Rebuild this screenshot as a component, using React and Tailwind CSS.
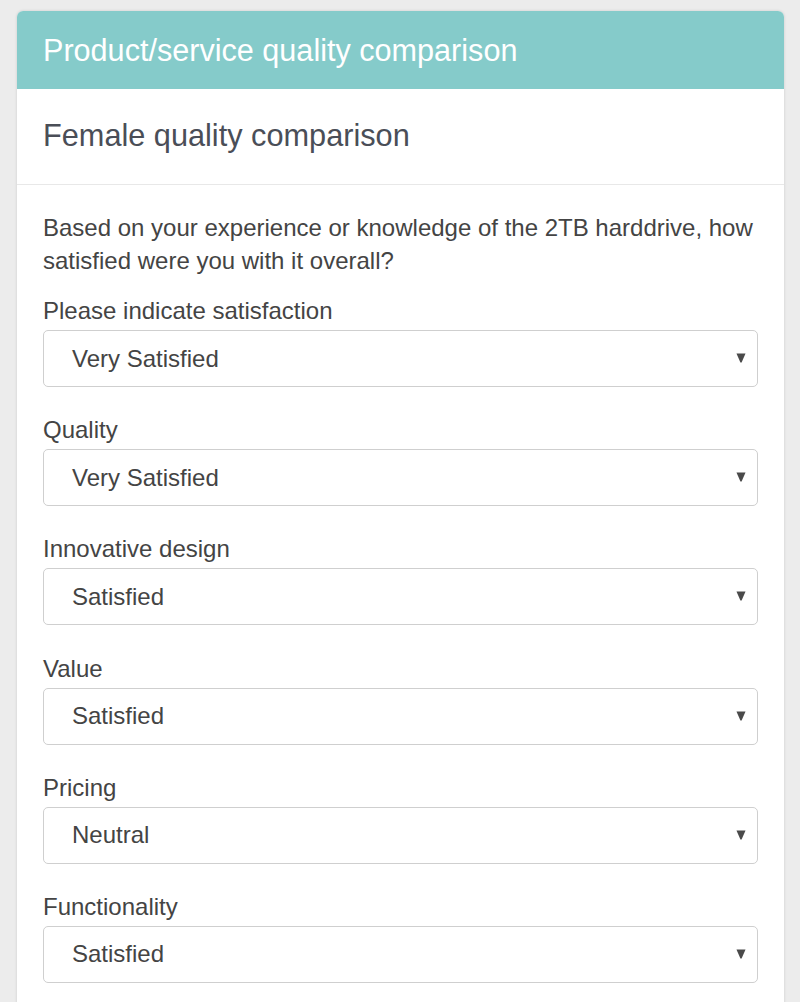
import React from "react";

const fields = [
  { label: "Please indicate satisfaction", value: "Very Satisfied" },
  { label: "Quality", value: "Very Satisfied" },
  { label: "Innovative design", value: "Satisfied" },
  { label: "Value", value: "Satisfied" },
  { label: "Pricing", value: "Neutral" },
  { label: "Functionality", value: "Satisfied" },
];

function Select({ value }) {
  return (
    <div className="flex h-[57px] items-center justify-between rounded-[5px] border border-[#cfcfcf] bg-white pl-[28px] pr-[11px]">
      <span className="text-[24px] leading-none text-[#444]">{value}</span>
      <svg width="10" height="10" viewBox="0 0 10 10" className="mt-[-1px]">
        <polygon points="0.5,0.5 9.5,0.5 5.6,9.5 4.4,9.5" fill="#4a4a4a" />
      </svg>
    </div>
  );
}

export default function App() {
  return (
    <div
      className="min-h-[1002px] w-full bg-[#ececec] pl-[17px] pr-[16px] pt-[11px]"
      style={{ fontFamily: '"Liberation Sans", Arial, sans-serif' }}
    >
      <div className="overflow-hidden rounded-t-[6px] bg-white shadow-[0_0_3px_rgba(0,0,0,0.15)]">
        <div className="flex h-[78px] items-center bg-[#85cbca] px-[26px]">
          <h1 className="text-[30.6px] leading-none text-white">
            Product/service quality comparison
          </h1>
        </div>
        <div className="flex h-[96px] items-center border-b border-[#e8e8e8] px-[26px]">
          <h2 className="text-[30.7px] leading-none text-[#4a4e57]">
            Female quality comparison
          </h2>
        </div>
        <div className="px-[26px] pt-[26px] pb-[40px]">
          <p className="mb-[20px] text-[24px] leading-[33px] text-[#444]">
            Based on your experience or knowledge of the 2TB harddrive, how
            satisfied were you with it overall?
          </p>
          <div className="flex flex-col gap-[29.2px]">
            {fields.map((f) => (
              <div key={f.label}>
                <label className="mb-[5px] block text-[24px] leading-[28px] text-[#444]">
                  {f.label}
                </label>
                <Select value={f.value} />
              </div>
            ))}
          </div>
        </div>
      </div>
    </div>
  );
}
